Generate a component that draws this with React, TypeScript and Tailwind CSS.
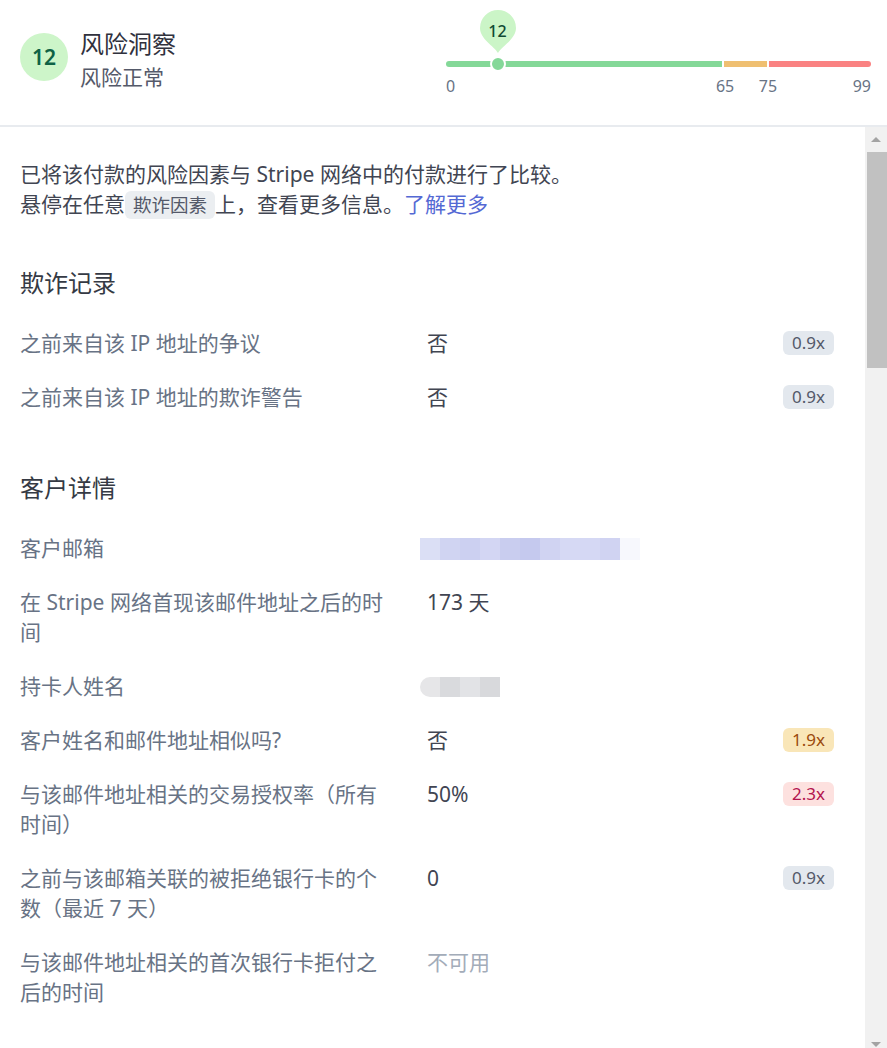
import React from "react";

type Tone = "neutral" | "warn" | "bad";

function Badge({ value, tone }: { value: string; tone: Tone }) {
  const cls =
    tone === "warn"
      ? "bg-[#f9e6b8] text-[#9b4a0d]"
      : tone === "bad"
      ? "bg-[#fde1df] text-[#b3134e]"
      : "bg-[#e3e8ee] text-[#545969]";
  return (
    <span
      className={`mt-[3px] inline-flex h-[24px] shrink-0 items-center rounded-[6px] px-[9px] text-[17px] leading-[24px] ${cls}`}
    >
      {value}
    </span>
  );
}

function Row({
  label,
  children,
  badge,
}: {
  label: React.ReactNode;
  children?: React.ReactNode;
  badge?: { value: string; tone: Tone };
}) {
  return (
    <div className="flex items-start">
      <div className="w-[407px] shrink-0 pr-[36px] text-[#687385]">{label}</div>
      <div className="min-w-0 flex-1 text-[#414552]">{children}</div>
      {badge ? <Badge value={badge.value} tone={badge.tone} /> : null}
    </div>
  );
}

const emailBlocks = [
  "#dbdff5",
  "#d0d4f2",
  "#ccd0f1",
  "#d3d6f3",
  "#c9cdef",
  "#c5c9ee",
  "#d0d3f2",
  "#d6d9f4",
  "#d5d8f4",
  "#d0d3f2",
  "#f7f8fd",
];
const nameBlocks = ["#e6e6e8", "#d9dadd", "#e2e3e6", "#d8d9dc"];

function Slider() {
  const score = 12;
  const max = 99;
  const pct = (v: number) => `${(v / max) * 100}%`;
  return (
    <div className="mr-[16px] ml-auto w-[425px] pt-[10px]">
      <div className="relative h-[51px]">
        <div
          className="absolute top-0 h-[44px] w-[36px]"
          style={{ left: `calc(${pct(score)} - 18px)` }}
        >
          <svg width="36" height="44" viewBox="0 0 36 44" className="absolute inset-0">
            <path
              d="M18 43 C 14 36, 0 29, 0 18 A 18 18 0 1 1 36 18 C 36 29, 22 36, 18 43 Z"
              fill="#cbf5c7"
            />
          </svg>
          <div className="relative flex h-[36px] items-center justify-center pt-[5px] text-[16px] font-medium text-[#114a33]">
            {score}
          </div>
        </div>
      </div>
      <div className="relative">
        <div className="flex h-[6px] gap-[2px]">
          <div className="flex-[65] rounded-l-full bg-[#84d898]" />
          <div className="flex-[10] bg-[#efbf71]" />
          <div className="flex-[24] rounded-r-full bg-[#fa8282]" />
        </div>
        <div
          className="absolute top-[-5px] h-[16px] w-[16px] -translate-x-1/2 rounded-full border-2 border-white bg-[#84d898]"
          style={{ left: pct(score) }}
        />
      </div>
      <div className="relative mt-[8px] h-[22px] text-[16px] leading-[22px] text-[#687385]">
        <span className="absolute left-0">0</span>
        <span className="absolute -translate-x-1/2" style={{ left: pct(65) }}>
          65
        </span>
        <span className="absolute -translate-x-1/2" style={{ left: pct(75) }}>
          75
        </span>
        <span className="absolute right-0">99</span>
      </div>
    </div>
  );
}

export default function App() {
  return (
    <div className="flex h-[1048px] w-full flex-col overflow-hidden bg-white font-['Noto_Sans','Noto_Sans_CJK_SC',sans-serif] text-[21px] leading-[30px] text-[#414552]">
      <header className="flex h-[127px] shrink-0 items-start border-b-2 border-[#e8ebef]">
        <div className="flex items-start gap-[12px] pl-[20px]">
          <div className="mt-[33px] flex h-[48px] w-[48px] items-center justify-center rounded-full bg-[#cdf5c9] text-[21px] font-semibold text-[#0e6245]">
            12
          </div>
          <div className="mt-[28px] flex flex-col">
            <div className="text-[24px] leading-[32px] text-[#30313d]">风险洞察</div>
            <div className="mt-[3px] text-[21px] leading-[28px] text-[#545969]">风险正常</div>
          </div>
        </div>
        <Slider />
      </header>

      <div className="flex min-h-0 flex-1">
        <main className="min-w-0 flex-1 pt-[32px] pr-[31px] pl-[20px]">
          <p className="text-[#414552]">
            已将该付款的风险因素与 Stripe 网络中的付款进行了比较。
            <br />
            悬停在任意
            <span className="inline-block rounded-[6px] bg-[#ebeef1] px-[8px] text-[18.5px] leading-[28px] text-[#545969]">
              欺诈因素
            </span>
            上，查看更多信息。
            <a className="text-[#5469d4]">了解更多</a>
          </p>

          <section className="mt-[48px]">
            <h2 className="text-[24px] leading-[32px] text-[#353a44]">欺诈记录</h2>
            <div className="mt-[29px] flex flex-col gap-[24px]">
              <Row label="之前来自该 IP 地址的争议" badge={{ value: "0.9x", tone: "neutral" }}>
                否
              </Row>
              <Row label="之前来自该 IP 地址的欺诈警告" badge={{ value: "0.9x", tone: "neutral" }}>
                否
              </Row>
            </div>
          </section>

          <section className="mt-[60px]">
            <h2 className="text-[24px] leading-[32px] text-[#353a44]">客户详情</h2>
            <div className="mt-[29px] flex flex-col gap-[24px]">
              <Row label="客户邮箱">
                <div className="mt-[5px] -ml-[7px] flex h-[22px]">
                  {emailBlocks.map((c, i) => (
                    <div key={i} className="h-full w-[20px]" style={{ backgroundColor: c }} />
                  ))}
                </div>
              </Row>
              <Row label="在 Stripe 网络首现该邮件地址之后的时间">173 天</Row>
              <Row label="持卡人姓名">
                <div className="mt-[6px] -ml-[7px] flex h-[20px]">
                  {nameBlocks.map((c, i) => (
                    <div
                      key={i}
                      className={`h-full w-[20px] ${i === 0 ? "rounded-l-full" : ""}`}
                      style={{ backgroundColor: c }}
                    />
                  ))}
                </div>
              </Row>
              <Row label="客户姓名和邮件地址相似吗?" badge={{ value: "1.9x", tone: "warn" }}>
                否
              </Row>
              <Row label="与该邮件地址相关的交易授权率（所有时间）" badge={{ value: "2.3x", tone: "bad" }}>
                50%
              </Row>
              <Row label="之前与该邮箱关联的被拒绝银行卡的个数（最近 7 天）" badge={{ value: "0.9x", tone: "neutral" }}>
                0
              </Row>
              <Row label="与该邮件地址相关的首次银行卡拒付之后的时间">
                <span className="text-[#a3acb9]">不可用</span>
              </Row>
            </div>
          </section>
        </main>

        <div className="flex w-[22px] shrink-0 flex-col bg-[#f1f1f1]">
          <div className="flex h-[25px] items-center justify-center">
            <div className="h-0 w-0 border-x-[5px] border-b-[5px] border-x-transparent border-b-[#a3a3a3]" />
          </div>
          <div className="ml-[2px] h-[216px] bg-[#c1c1c1]" />
          <div className="flex-1" />
          <div className="flex h-[6px] items-start justify-center overflow-hidden">
            <div className="h-0 w-0 border-x-[5px] border-t-[5px] border-x-transparent border-t-[#a3a3a3]" />
          </div>
        </div>
      </div>
    </div>
  );
}
